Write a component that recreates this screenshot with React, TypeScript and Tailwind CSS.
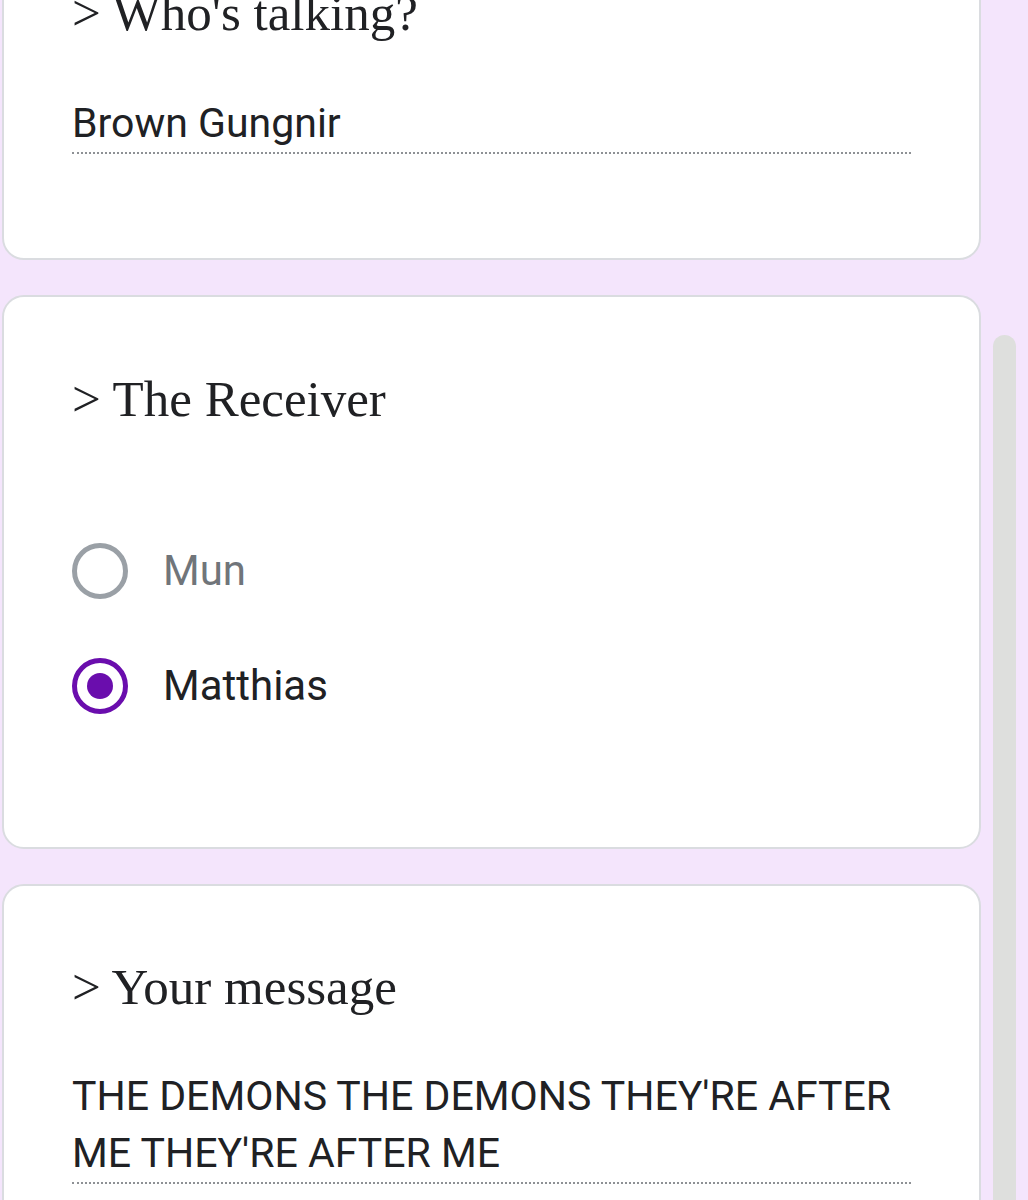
import React from "react";

const serif = { fontFamily: '"Liberation Serif", "DejaVu Serif", serif' };

function Card({ children, className = "" }: { children: React.ReactNode; className?: string }) {
  return (
    <div className={`w-[979px] bg-white border-2 border-[#dadce0] rounded-[22px] px-[68px] ${className}`}>
      {children}
    </div>
  );
}

function Heading({ children }: { children: React.ReactNode }) {
  return (
    <h2 className="text-[51px] leading-[60px] text-[#202124]" style={serif}>
      {children}
    </h2>
  );
}

function Answer({ children, className = "mt-[50px]" }: { children: React.ReactNode; className?: string }) {
  return (
    <div
      className={`${className} w-[839px] border-b-2 border-dotted border-[#8e9195] text-[41px] leading-[57px] text-[#202124] font-['Roboto',sans-serif]`}
    >
      {children}
    </div>
  );
}

function Radio({ label, checked }: { label: string; checked?: boolean }) {
  return (
    <label className="flex items-center h-[115px] gap-[35px] cursor-pointer">
      <span
        className={`flex items-center justify-center w-[56px] h-[56px] rounded-full border-[5px] ${
          checked ? "border-[#6a0dad]" : "border-[#9aa0a6]"
        }`}
      >
        {checked && <span className="w-[26px] h-[26px] rounded-full bg-[#6a0dad]" />}
      </span>
      <span
        className={`text-[42px] leading-[57px] font-['Roboto',sans-serif] ${
          checked ? "text-[#202124]" : "text-[#70757a]"
        }`}
      >
        {label}
      </span>
    </label>
  );
}

export default function App() {
  return (
    <div className="relative min-h-[1200px] overflow-hidden bg-[#f4e5fc] pl-[2px]">
      <div className="flex flex-col gap-[35px] -mt-[91px]">
        {/* Who's talking */}
        <Card className="pt-[72px] pb-[104px]">
          <Heading>&gt; Who's talking?</Heading>
          <Answer className="mt-[52px]">Brown Gungnir</Answer>
        </Card>

        {/* Receiver */}
        <Card className="pt-[72px] pb-[104px]">
          <Heading>&gt; The Receiver</Heading>
          <div className="mt-[84px] flex flex-col">
            <Radio label="Mun" />
            <Radio label="Matthias" checked />
          </div>
        </Card>

        {/* Message */}
        <Card className="pt-[71px] pb-[80px]">
          <Heading>&gt; Your message</Heading>
          <Answer className="mt-[51px]">THE DEMONS THE DEMONS THEY'RE AFTER ME THEY'RE AFTER ME</Answer>
        </Card>
      </div>

      {/* scrollbar */}
      <div className="absolute left-[993px] top-[335px] w-[23px] h-[900px] rounded-full bg-[#dedfdd]" />
    </div>
  );
}
